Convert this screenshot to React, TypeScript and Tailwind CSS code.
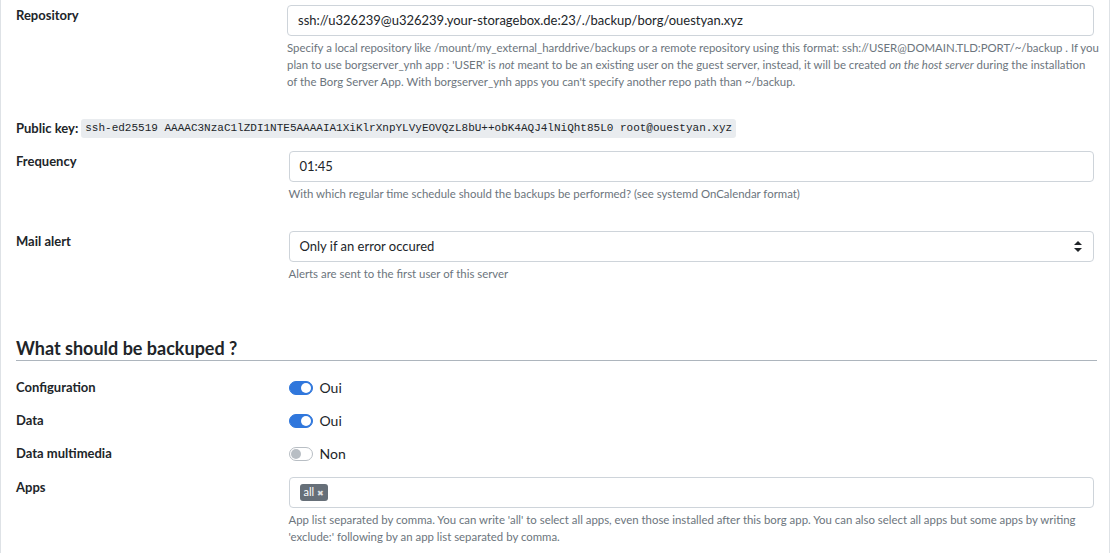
const font = { fontFamily: 'Lato, "Open Sans", sans-serif' }

function Toggle({ on, label }: { on: boolean; label: string }) {
  return (
    <div className="flex items-center gap-[7px]">
      <span
        className={`relative inline-block w-[24px] h-[14px] rounded-full border ${on ? 'bg-[#3077dc] border-[#3077dc]' : 'bg-white border-[#b8bec4]'}`}
      >
        <span
          className={`absolute top-[1px] w-[10px] h-[10px] rounded-full ${on ? 'left-[11px] bg-white' : 'left-[1px] bg-[#b8bec4]'}`}
        />
      </span>
      <span className="text-[14px] text-[#212529]">{label}</span>
    </div>
  )
}

function Field({ label, children, help, className = '' }: { label: string; children: React.ReactNode; help?: React.ReactNode; className?: string }) {
  return (
    <div className={`flex ${className}`}>
      <div className="w-[273px] text-[13px] leading-[21px] font-bold text-[#212529]">{label}</div>
      <div className="w-[807px]">
        {children}
        {help && <div className="mt-[3px] text-[11.4px] leading-[17px] text-[#6c757d] whitespace-nowrap">{help}</div>}
      </div>
    </div>
  )
}

const inputCls = 'h-[31px] flex items-center px-[10px] border border-[#ced4da] rounded-[4px] text-[13px] text-[#212529]'

export default function App() {
  return (
    <div className="w-[1110px] h-[553px] bg-white border-l border-r border-[#dee2e6] overflow-hidden" style={font}>
      <div className="px-[15px] pt-[5px]">
        <Field
          label="Repository"
          help={
            <>
              Specify a local repository like /mount/my_external_harddrive/backups or a remote repository using this format: ssh://USER@DOMAIN.TLD:PORT/~/backup . If you
              <br />
              plan to use borgserver_ynh app : 'USER' is <i>not</i> meant to be an existing user on the guest server, instead, it will be created <i>on the host server</i> during the installation
              <br />
              of the Borg Server App. With borgserver_ynh apps you can't specify another repo path than ~/backup.
            </>
          }
        >
          <div className={inputCls}>ssh://u326239@u326239.your-storagebox.de:23/./backup/borg/ouestyan.xyz</div>
        </Field>

        <div className="mt-[29px] flex items-center h-[19px] text-[13px] text-[#212529]">
          <span className="font-bold mr-[3px]">Public key:</span>
          <code className="px-[4px] h-[19px] leading-[19px] rounded-[3px] bg-[#e9ecef] text-[11px]" style={{ fontFamily: '"Liberation Mono", "DejaVu Sans Mono", monospace' }}>
            ssh-ed25519 AAAAC3NzaC1lZDI1NTE5AAAAIA1XiKlrXnpYLVyEOVQzL8bU++obK4AQJ4lNiQht85L0 root@ouestyan.xyz
          </code>
        </div>

        <Field
          className="mt-[13px]"
          label="Frequency"
          help="With which regular time schedule should the backups be performed? (see systemd OnCalendar format)"
        >
          <div className={inputCls}>01:45</div>
        </Field>

        <Field className="mt-[29px]" label="Mail alert" help="Alerts are sent to the first user of this server">
          <div className={`${inputCls} justify-between`}>
            <span>Only if an error occured</span>
            <svg width="8" height="11" viewBox="0 0 8 11" className="mr-[1px]">
              <path d="M4 0 L8 4 L0 4 Z" fill="#212529" />
              <path d="M4 11 L8 7 L0 7 Z" fill="#212529" />
            </svg>
          </div>
        </Field>

        <h2 className="mt-[55px] pb-[1px] border-b border-[#adb5bd] w-[1081px] text-[18px] leading-[22px] font-bold text-[#212529]">
          What should be backuped ?
        </h2>

        <Field className="mt-[16px] items-center" label="Configuration">
          <Toggle on label="Oui" />
        </Field>
        <Field className="mt-[12px] items-center" label="Data">
          <Toggle on label="Oui" />
        </Field>
        <Field className="mt-[12px] items-center" label="Data multimedia">
          <Toggle on={false} label="Non" />
        </Field>

        <Field
          className="mt-[13px]"
          label="Apps"
          help={
            <>
              App list separated by comma. You can write 'all' to select all apps, even those installed after this borg app. You can also select all apps but some apps by writing
              <br />
              'exclude:' following by an app list separated by comma.
            </>
          }
        >
          <div className={inputCls}>
            <span className="flex items-center gap-[3px] h-[17px] px-[4px] rounded-[3px] bg-[#666f78] text-white text-[11px]">
              all <span className="text-[8px] opacity-80">✖</span>
            </span>
          </div>
        </Field>
      </div>
    </div>
  )
}
